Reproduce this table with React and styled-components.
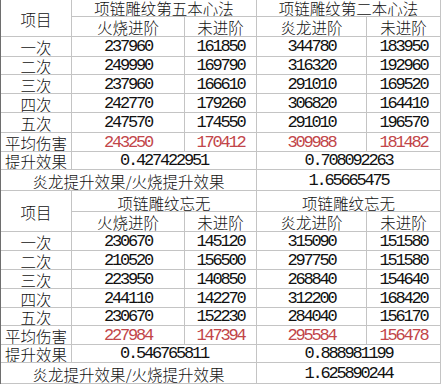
import React from 'react';
import styled, { createGlobalStyle } from 'styled-components';

const GlobalStyle = createGlobalStyle`
  html, body {
    margin: 0;
    background: #ffffff;
  }
`;

// column widths and row heights read off the sheet
const COLS = '71px 113px 72px 110px 74px';
const ROWS = [17, 20, 20, 18, 19, 19, 20, 19, 18, 21, 21, 20, 19, 19, 19, 19, 18, 19, 18, 21];

const Sheet = styled.div`
  display: grid;
  grid-template-columns: ${props => props.$cols};
  grid-template-rows: ${props => props.$rows};
  width: 441px;
  border-left: 1px solid #6e6e6e;
  box-sizing: border-box;
  background: #ffffff;
  font-family: "Noto Sans CJK SC", "Liberation Sans", sans-serif;
  font-size: 16px;
  color: #111;
`;

const Cell = styled.div`
  grid-column: span ${props => props.$span || 1};
  grid-row: span ${props => props.$rowSpan || 1};
  display: flex;
  align-items: ${props => props.$bottom ? 'flex-end' : 'center'};
  justify-content: center;
  border-right: 1px solid #c4c4c4;
  border-bottom: 1px solid #c4c4c4;
  box-sizing: border-box;
  overflow: hidden;
  white-space: nowrap;
  line-height: 16px;
  padding-top: ${props => props.$bottom ? '0' : '1px'};
`;

const Label = styled.span`
  font-weight: 300;
  font-size: 15.5px;
`;

const Num = styled.span`
  font-family: "Liberation Mono", "DejaVu Sans Mono", monospace;
  font-size: 17px;
  letter-spacing: -2.2px;
  color: ${props => props.$red ? '#c2464a' : '#111'};
`;

const BLOCKS = [
  {
    titles: ['项链雕纹第五本心法', '项链雕纹第二本心法'],
    rows: [
      ['一次', 237960, 161850, 344780, 183950],
      ['二次', 249990, 169790, 316320, 192960],
      ['三次', 237960, 166610, 291010, 169520],
      ['四次', 242770, 179260, 306820, 164410],
      ['五次', 247570, 174550, 291010, 196570],
    ],
    avg: [243250, 170412, 309988, 181482],
    gain: ['0.427422951', '0.708092263'],
    ratio: '1.65665475',
  },
  {
    titles: ['项链雕纹忘无', '项链雕纹忘无'],
    rows: [
      ['一次', 230670, 145120, 315090, 151580],
      ['二次', 210520, 156500, 297750, 151580],
      ['三次', 223950, 140850, 268840, 154640],
      ['四次', 244110, 142270, 312200, 168420],
      ['五次', 230670, 152230, 284040, 156170],
    ],
    avg: [227984, 147394, 295584, 156478],
    gain: ['0.546765811', '0.888981199'],
    ratio: '1.625890244',
  },
];

const Block = ({ data }) => (
  <>
    <Cell $rowSpan={2}><Label>项目</Label></Cell>
    <Cell $span={2} $bottom><Label>{data.titles[0]}</Label></Cell>
    <Cell $span={2} $bottom><Label>{data.titles[1]}</Label></Cell>
    <Cell><Label>火烧进阶</Label></Cell>
    <Cell><Label>未进阶</Label></Cell>
    <Cell><Label>炎龙进阶</Label></Cell>
    <Cell><Label>未进阶</Label></Cell>

    {data.rows.map(([name, ...vals]) => (
      <React.Fragment key={name}>
        <Cell><Label>{name}</Label></Cell>
        {vals.map((v, i) => (
          <Cell key={i}><Num>{v}</Num></Cell>
        ))}
      </React.Fragment>
    ))}

    <Cell><Label>平均伤害</Label></Cell>
    {data.avg.map((v, i) => (
      <Cell key={i}><Num $red>{v}</Num></Cell>
    ))}

    <Cell><Label>提升效果</Label></Cell>
    <Cell $span={2}><Num>{data.gain[0]}</Num></Cell>
    <Cell $span={2}><Num>{data.gain[1]}</Num></Cell>

    <Cell $span={3}><Label>炎龙提升效果/火烧提升效果</Label></Cell>
    <Cell $span={2}><Num>{data.ratio}</Num></Cell>
  </>
);

const App = () => (
  <>
    <GlobalStyle />
    <Sheet $cols={COLS} $rows={ROWS.map(h => `${h}px`).join(' ')}>
      {BLOCKS.map((b, i) => <Block key={i} data={b} />)}
    </Sheet>
  </>
);

export default App;
